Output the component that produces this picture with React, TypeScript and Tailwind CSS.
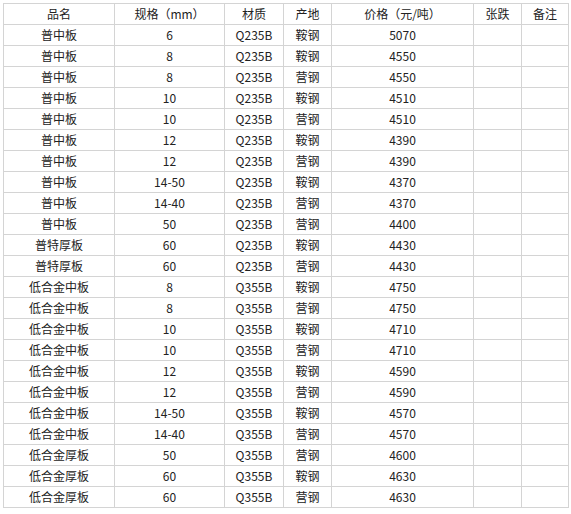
import { Fragment, type ReactNode } from 'react';

const headers = ['品名', '规格（mm）', '材质', '产地', '价格（元/吨）', '张跌', '备注'];

const rows: [string, string, string, string, string][] = [
  ['普中板', '6', 'Q235B', '鞍钢', '5070'],
  ['普中板', '8', 'Q235B', '鞍钢', '4550'],
  ['普中板', '8', 'Q235B', '营钢', '4550'],
  ['普中板', '10', 'Q235B', '鞍钢', '4510'],
  ['普中板', '10', 'Q235B', '营钢', '4510'],
  ['普中板', '12', 'Q235B', '鞍钢', '4390'],
  ['普中板', '12', 'Q235B', '营钢', '4390'],
  ['普中板', '14-50', 'Q235B', '鞍钢', '4370'],
  ['普中板', '14-40', 'Q235B', '营钢', '4370'],
  ['普中板', '50', 'Q235B', '营钢', '4400'],
  ['普特厚板', '60', 'Q235B', '鞍钢', '4430'],
  ['普特厚板', '60', 'Q235B', '营钢', '4430'],
  ['低合金中板', '8', 'Q355B', '鞍钢', '4750'],
  ['低合金中板', '8', 'Q355B', '营钢', '4750'],
  ['低合金中板', '10', 'Q355B', '鞍钢', '4710'],
  ['低合金中板', '10', 'Q355B', '营钢', '4710'],
  ['低合金中板', '12', 'Q355B', '鞍钢', '4590'],
  ['低合金中板', '12', 'Q355B', '营钢', '4590'],
  ['低合金中板', '14-50', 'Q355B', '鞍钢', '4570'],
  ['低合金中板', '14-40', 'Q355B', '营钢', '4570'],
  ['低合金厚板', '50', 'Q355B', '营钢', '4600'],
  ['低合金厚板', '60', 'Q355B', '鞍钢', '4630'],
  ['低合金厚板', '60', 'Q355B', '营钢', '4630'],
];

const Cell = ({ children }: { children?: ReactNode }) => (
  <div className="bg-white flex items-center justify-center leading-none">{children}</div>
);

export default function App() {
  return (
    <div className="bg-white min-h-[514px] pt-[3px] pl-[3px] font-['Noto_Sans_CJK_SC',sans-serif] text-[12px] text-[#222]">
      {/* 表格：灰色 1px 网格线 */}
      <div className="grid w-fit grid-cols-[110px_109px_58px_47px_141px_47px_46px] auto-rows-[20px] gap-px p-px bg-[#d4d4d4]">
        {headers.map((h) => (
          <Cell key={h}>{h}</Cell>
        ))}
        {rows.map((r, i) => (
          <Fragment key={i}>
            {r.map((v, j) => (
              <Cell key={j}>{v}</Cell>
            ))}
            <Cell />
            <Cell />
          </Fragment>
        ))}
      </div>
    </div>
  );
}
